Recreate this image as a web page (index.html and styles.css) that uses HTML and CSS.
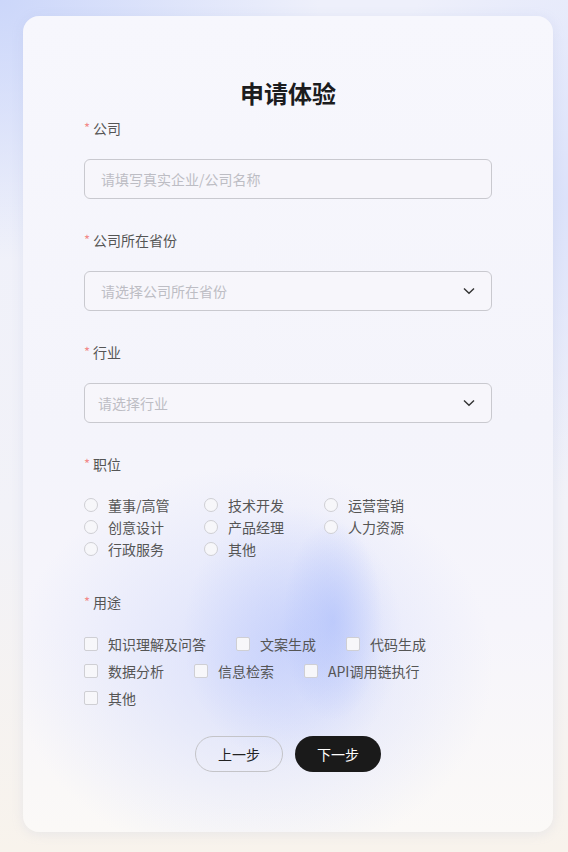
FILE: index.html
```html
<!DOCTYPE html>
<html lang="zh">
<head>
<meta charset="utf-8">
<title>申请体验</title>
<link rel="stylesheet" href="styles.css">
</head>
<body>
<div class="card">
  <h1 class="title">申请体验</h1>

  <div class="field">
    <div class="label"><span class="req">*</span>公司</div>
    <div class="input"><span class="ph">请填写真实企业/公司名称</span></div>
  </div>

  <div class="field">
    <div class="label"><span class="req">*</span>公司所在省份</div>
    <div class="input select"><span class="ph">请选择公司所在省份</span>
      <svg class="chev" width="12" height="8" viewBox="0 0 12 8"><path d="M1 1.5 L6 6.3 L11 1.5" fill="none" stroke="#333" stroke-width="1.4"/></svg>
    </div>
  </div>

  <div class="field">
    <div class="label"><span class="req">*</span>行业</div>
    <div class="input select ph-tight"><span class="ph">请选择行业</span>
      <svg class="chev" width="12" height="8" viewBox="0 0 12 8"><path d="M1 1.5 L6 6.3 L11 1.5" fill="none" stroke="#333" stroke-width="1.4"/></svg>
    </div>
  </div>

  <div class="field">
    <div class="label"><span class="req">*</span>职位</div>
    <div class="radios">
      <label class="opt"><span class="radio"></span>董事/高管</label>
      <label class="opt"><span class="radio"></span>技术开发</label>
      <label class="opt"><span class="radio"></span>运营营销</label>
      <label class="opt"><span class="radio"></span>创意设计</label>
      <label class="opt"><span class="radio"></span>产品经理</label>
      <label class="opt"><span class="radio"></span>人力资源</label>
      <label class="opt"><span class="radio"></span>行政服务</label>
      <label class="opt"><span class="radio"></span>其他</label>
    </div>
  </div>

  <div class="field">
    <div class="label"><span class="req">*</span>用途</div>
    <div class="checks">
      <label class="opt c"><span class="box"></span>知识理解及问答</label>
      <label class="opt c"><span class="box"></span>文案生成</label>
      <label class="opt c"><span class="box"></span>代码生成</label>
      <label class="opt c"><span class="box"></span>数据分析</label>
      <label class="opt c"><span class="box"></span>信息检索</label>
      <label class="opt c"><span class="box"></span>API调用链执行</label>
      <label class="opt c"><span class="box"></span>其他</label>
    </div>
  </div>

  <div class="actions">
    <button class="btn prev">上一步</button>
    <button class="btn next">下一步</button>
  </div>
</div>
</body>
</html>
```
FILE: styles.css
```css
* { box-sizing: border-box; }
html, body { margin: 0; padding: 0; }
body {
  width: 568px;
  height: 852px;
  overflow: hidden;
  font-family: "Noto Sans CJK SC", "Noto Sans", sans-serif;
  background:
    radial-gradient(ellipse 320px 260px at 0px 0px, rgba(200, 212, 250, 0.9), rgba(200,212,250,0) 100%),
    radial-gradient(ellipse 200px 300px at 568px 200px, rgba(215, 222, 250, 0.8), rgba(215,222,250,0) 100%),
    linear-gradient(to bottom, #eef0fb 0%, #f2f2f8 60%, #f8f3ec 100%);
  padding-top: 16px;
}
.card {
  margin-left: 23px;
  width: 530px;
  height: 816px;
  border-radius: 16px;
  padding: 61px 61px 0 61px;
  box-shadow: 0 2px 12px rgba(160, 170, 210, 0.18);
  background:
    radial-gradient(ellipse 50px 100px at 310px 605px, rgba(170, 188, 252, 0.55), rgba(170,188,252,0) 100%),
    radial-gradient(ellipse 110px 130px at 270px 620px, rgba(180, 195, 252, 0.55), rgba(180,195,252,0) 100%),
    radial-gradient(ellipse 240px 200px at 230px 650px, rgba(200, 210, 252, 0.6), rgba(200,210,252,0) 100%),
    linear-gradient(to bottom, #f7f7fd 0%, #f4f4fb 50%, #f6f5fb 75%, #fbf9f7 100%);
}
.title {
  margin: 0 0 9px 0;
  text-align: center;
  font-size: 24px;
  line-height: 32px;
  font-weight: 700;
  color: #1c1c1e;
}
.field { margin-bottom: 31px; }
.label {
  font-size: 14px;
  line-height: 20px;
  height: 20px;
  color: #555;
  margin-bottom: 21px;
}
.req {
  display: inline-block;
  vertical-align: top;
  line-height: 20px;
  color: #f28a8a;
  margin-right: 3px;
  font-size: 13px;
}
.input {
  height: 40px;
  border: 1px solid #c9c9cf;
  border-radius: 6px;
  background: #f7f6fb;
  display: flex;
  align-items: center;
  padding: 0 16px;
  font-size: 14px;
}
.input.ph-tight { padding-left: 13px; }
.ph { color: #bdbdc4; flex: 1; }
.radios {
  display: grid;
  grid-template-columns: 120px 120px 120px;
  margin-top: -1px;
  padding-bottom: 1px;
}
.opt {
  display: flex;
  align-items: center;
  font-size: 14px;
  line-height: 22px;
  height: 22px;
  color: #555;
}
.radio {
  width: 14px;
  height: 14px;
  border-radius: 50%;
  border: 1px solid #cfcfd4;
  background: #f7f7fa;
  margin-right: 10px;
  flex: none;
}
.checks {
  display: flex;
  flex-wrap: wrap;
  row-gap: 5px;
  width: 380px;
}
.opt.c { margin-right: 30px; }
.box {
  width: 14px;
  height: 14px;
  border-radius: 2px;
  border: 1px solid #cfcfd4;
  background: #f7f7fa;
  margin-right: 10px;
  flex: none;
}
.actions {
  margin-top: -4px;
  display: flex;
  justify-content: center;
  gap: 12px;
}
.btn {
  height: 36px;
  border-radius: 18px;
  font-family: inherit;
  font-size: 14px;
  padding: 0;
  cursor: pointer;
}
.prev {
  width: 88px;
  background: transparent;
  border: 1px solid #c4c4c8;
  color: #222;
}
.next {
  width: 86px;
  background: #1a1a1a;
  border: none;
  color: #fff;
}
```
